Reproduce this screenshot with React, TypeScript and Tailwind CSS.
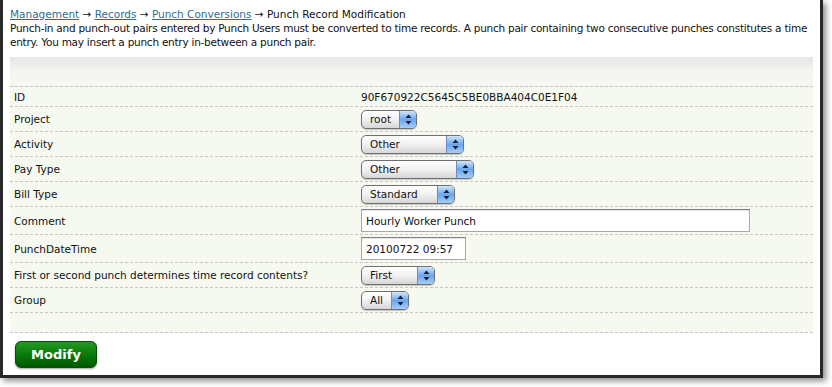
import React from 'react';

function Arrows() {
  return (
    <svg width="7" height="11" viewBox="0 0 7 11" className="block">
      <path d="M3.5 0.5 L6.5 4 L0.5 4 Z" fill="#0d1f3a" />
      <path d="M3.5 10.5 L6.5 7 L0.5 7 Z" fill="#0d1f3a" />
    </svg>
  );
}

function AquaSelect({ value, className }: { value: string; className: string }) {
  return (
    <div
      className={
        'flex h-[19px] items-stretch overflow-hidden rounded-[5px] border border-[#707070] bg-gradient-to-b from-white via-[#f1f1f1] to-[#d6d6d6] shadow-[0_1px_1px_rgba(0,0,0,0.2)] ' +
        className
      }
    >
      <span className="flex-1 pl-[8px] leading-[17px] whitespace-nowrap">{value}</span>
      <span className="flex w-[17px] items-center justify-center border-l border-[#6b8fc0] bg-gradient-to-b from-[#d2e6fb] via-[#6aa6ec] to-[#a6cdf6]">
        <Arrows />
      </span>
    </div>
  );
}

function TextField({ value, className }: { value: string; className: string }) {
  return (
    <div
      className={
        'flex h-[23px] items-center border border-[#a8a8a8] border-t-[#808080] bg-white pl-[4px] whitespace-nowrap shadow-[inset_0_1px_1px_rgba(0,0,0,0.12)] ' +
        className
      }
    >
      {value}
    </div>
  );
}

const rows: { label: string; h: string; field: React.ReactNode }[] = [
  { label: 'ID', h: 'h-[20px]', field: <span>90F670922C5645C5BE0BBA404C0E1F04</span> },
  { label: 'Project', h: 'h-[25px]', field: <AquaSelect value="root" className="w-[56px]" /> },
  { label: 'Activity', h: 'h-[25px]', field: <AquaSelect value="Other" className="w-[103px]" /> },
  { label: 'Pay Type', h: 'h-[25px]', field: <AquaSelect value="Other" className="w-[113px]" /> },
  { label: 'Bill Type', h: 'h-[25px]', field: <AquaSelect value="Standard" className="w-[94px]" /> },
  { label: 'Comment', h: 'h-[28px]', field: <TextField value="Hourly Worker Punch" className="w-[389px]" /> },
  { label: 'PunchDateTime', h: 'h-[28px]', field: <TextField value="20100722 09:57" className="w-[105px]" /> },
  {
    label: 'First or second punch determines time record contents?',
    h: 'h-[25px]',
    field: <AquaSelect value="First" className="w-[74px]" />,
  },
  { label: 'Group', h: 'h-[25px]', field: <AquaSelect value="All" className="w-[48px]" /> },
];

export default function App() {
  return (
    <div className="h-[387px] w-[832px] overflow-hidden bg-white font-['DejaVu_Sans','Verdana',sans-serif] text-[10.5px] leading-[14px] text-[#111]">
      <div className="h-[378px] w-[823px] border-x-[3px] border-b-[3px] border-[#282828] bg-white pl-[7px] pr-[7px] pt-[7px] shadow-[3px_3px_6px_rgba(0,0,0,0.45)]">
        {/* Breadcrumb */}
        <div>
          <a className="text-[#2a6d98] underline">Management</a> →{' '}
          <a className="text-[#2a6d98] underline">Records</a> →{' '}
          <a className="text-[#2a6d98] underline">Punch Conversions</a> → Punch Record Modification
        </div>
        <p className="tracking-[-0.25px]">
          Punch-in and punch-out pairs entered by Punch Users must be converted to time records. A punch pair
          containing two consecutive punches constitutes a time entry. You may insert a punch entry in-between a
          punch pair.
        </p>

        {/* Form */}
        <div className="mt-[8px] w-[803px] bg-[#f6f9f0]">
          <div className="h-[30px] border-b border-dashed border-[#c6c6c6] bg-gradient-to-b from-[#e6e6e6] via-[#f3f5f0] to-[#f6f9f0]" />
          {rows.map((r) => (
            <div
              key={r.label}
              className={'grid grid-cols-[347px_1fr] items-center border-b border-dashed border-[#c6c6c6] pl-[4px] ' + r.h}
            >
              <span className="whitespace-nowrap">{r.label}</span>
              <div className="flex">{r.field}</div>
            </div>
          ))}
          <div className="h-[20px] border-b border-dashed border-[#c6c6c6]" />
        </div>

        <button className="ml-[5px] mt-[8px] h-[27px] w-[82px] rounded-[6px] border border-[#0b4a0b] bg-gradient-to-b from-[#239a23] via-[#0a7a0a] to-[#005800] text-[13px] font-bold text-white shadow-[0_1px_2px_rgba(0,0,0,0.35)]">
          Modify
        </button>
      </div>
    </div>
  );
}
